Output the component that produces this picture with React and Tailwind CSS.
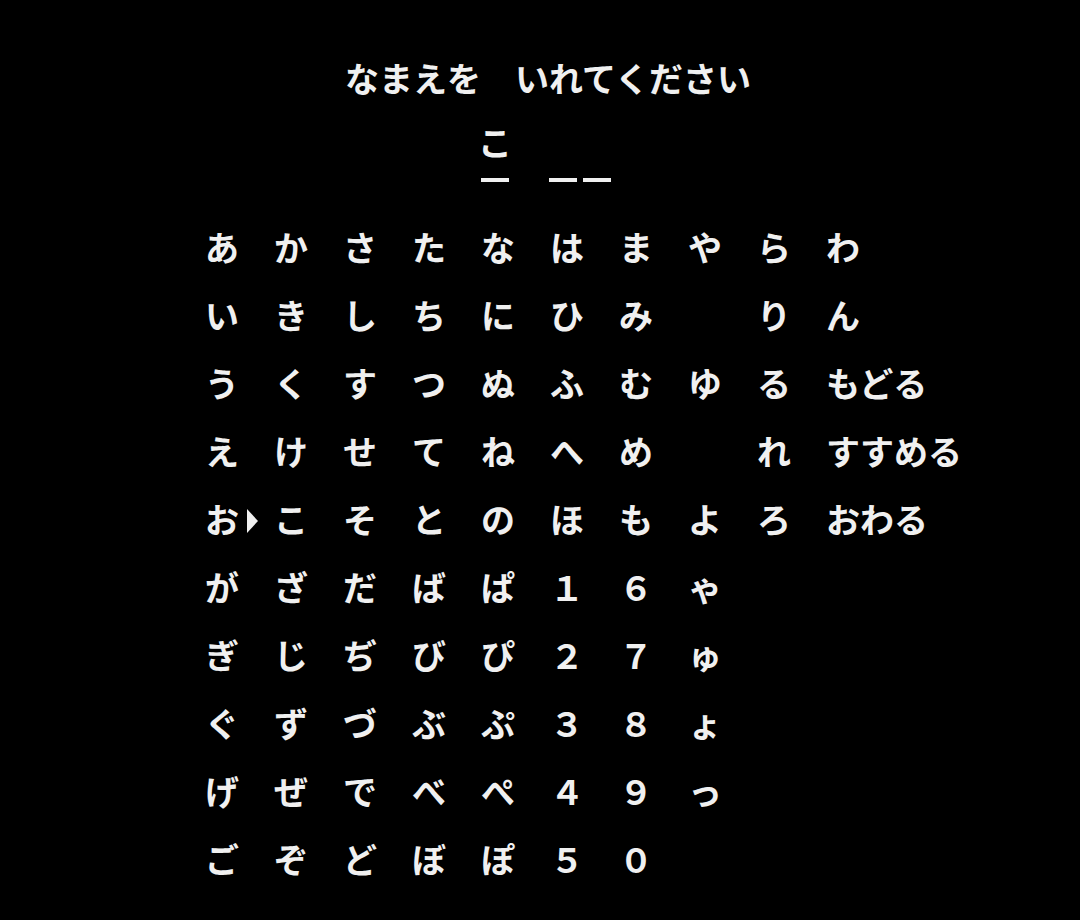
import React from 'react';

const rows = [
  ['あ', 'か', 'さ', 'た', 'な', 'は', 'ま', 'や', 'ら', 'わ'],
  ['い', 'き', 'し', 'ち', 'に', 'ひ', 'み', '', 'り', 'ん'],
  ['う', 'く', 'す', 'つ', 'ぬ', 'ふ', 'む', 'ゆ', 'る', 'もどる'],
  ['え', 'け', 'せ', 'て', 'ね', 'へ', 'め', '', 'れ', 'すすめる'],
  ['お', 'こ', 'そ', 'と', 'の', 'ほ', 'も', 'よ', 'ろ', 'おわる'],
  ['が', 'ざ', 'だ', 'ば', 'ぱ', '１', '６', 'ゃ', '', ''],
  ['ぎ', 'じ', 'ぢ', 'び', 'ぴ', '２', '７', 'ゅ', '', ''],
  ['ぐ', 'ず', 'づ', 'ぶ', 'ぷ', '３', '８', 'ょ', '', ''],
  ['げ', 'ぜ', 'で', 'べ', 'ぺ', '４', '９', 'っ', '', ''],
  ['ご', 'ぞ', 'ど', 'ぼ', 'ぽ', '５', '０', '', '', ''],
];

// null = blank slot without underline (cursor position)
const name = ['こ', null, '', ''];

function Cursor() {
  return (
    <svg
      className="absolute left-[42px] top-[24px]"
      width="11"
      height="24"
      viewBox="0 0 11 24"
    >
      <polygon points="0,0 11,12 0,24" fill="#f0f0f0" />
    </svg>
  );
}

export default function App() {
  return (
    <div
      className="w-full h-[920px] bg-black text-[#f0f0f0] overflow-hidden"
      style={{ fontFamily: '"Noto Sans CJK JP", "Noto Sans", sans-serif' }}
    >
      <div className="pt-[61px] pl-[345px] h-[95px] text-[34px] leading-[34px] whitespace-pre font-bold">
        なまえを　いれてください
      </div>

      <div className="pt-[30px] pl-[478px] flex h-[118px]">
        {name.map((c, i) => (
          <div key={i} className="w-[34px] flex flex-col items-center">
            <div className="h-[34px] text-[34px] leading-[34px] font-bold">{c || ''}</div>
            {c !== null && <div className="mt-[19px] h-[4px] w-[28px] bg-[#f0f0f0]" />}
          </div>
        ))}
      </div>

      <div className="pl-[205px] grid grid-cols-[repeat(9,69px)_1fr] auto-rows-[68px]">
        {rows.map((row, r) =>
          row.map((c, i) => (
            <div
              key={r + '-' + i}
              className="relative flex items-center text-[34px] leading-[34px] whitespace-nowrap font-bold"
            >
              {c}
              {r === 4 && i === 0 && <Cursor />}
            </div>
          ))
        )}
      </div>
    </div>
  );
}
